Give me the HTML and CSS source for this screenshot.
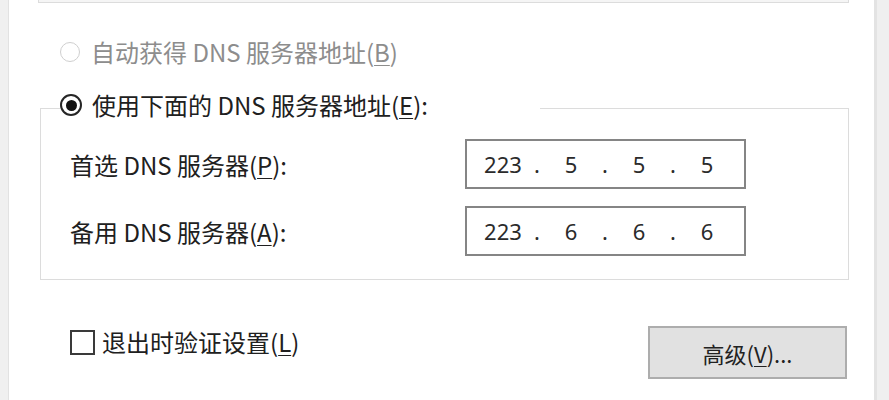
FILE: index.html
```html
<!DOCTYPE html>
<html lang="zh-CN">
<head>
<meta charset="utf-8">
<title>DNS 设置</title>
<link rel="stylesheet" href="styles.css">
</head>
<body>
<div class="window">
  <div class="edge-left"></div>
  <div class="dialog">
    <div class="prev-box"></div>

    <div class="option disabled">
      <span class="radio"></span>
      <span class="label">自动获得 DNS 服务器地址(<u>B</u>)</span>
    </div>

    <fieldset class="group">
      <legend class="group-legend">
        <span class="radio checked"><span class="dot"></span></span>
        <span class="label">使用下面的 DNS 服务器地址(<u>E</u>):</span>
      </legend>
      <div class="field-row first">
        <span class="field-label">首选 DNS 服务器(<u>P</u>):</span>
        <div class="ip-box">
          <span class="octet">223</span><span class="sep">.</span><span class="octet">5</span><span class="sep">.</span><span class="octet">5</span><span class="sep">.</span><span class="octet">5</span>
        </div>
      </div>
      <div class="field-row">
        <span class="field-label">备用 DNS 服务器(<u>A</u>):</span>
        <div class="ip-box">
          <span class="octet">223</span><span class="sep">.</span><span class="octet">6</span><span class="sep">.</span><span class="octet">6</span><span class="sep">.</span><span class="octet">6</span>
        </div>
      </div>
    </fieldset>

    <div class="footer">
      <div class="check-option">
        <span class="checkbox"></span>
        <span class="label">退出时验证设置(<u>L</u>)</span>
      </div>
      <button class="btn" type="button">高级(<u>V</u>)...</button>
    </div>
  </div>
  <div class="edge-right"></div>
</div>
</body>
</html>
```

FILE: styles.css
```css
html, body {
  margin: 0;
  padding: 0;
  background: #ffffff;
}

body {
  font-family: "Noto Sans CJK SC", "Noto Sans", sans-serif;
  color: #202020;
  font-size: 24px;
}

.window {
  display: flex;
  width: 889px;
  height: 400px;
  overflow: hidden;
}

.edge-left {
  width: 8px;
  flex: none;
  background: #f0f0f0;
  border-right: 1px solid #e2e2e2;
}

.edge-right {
  width: 12px;
  flex: none;
  background: #efefef;
  border-left: 3px solid #e3e3e3;
}

.dialog {
  flex: 1;
  display: flex;
  flex-direction: column;
  background: #ffffff;
}

.prev-box {
  height: 2px;
  margin: 0 25px 0 29px;
  background: #f5f5f5;
  border: 1px solid #dcdcdc;
  border-top: none;
}

.option {
  display: flex;
  align-items: center;
  height: 30px;
  margin-top: 34px;
  padding-left: 51px;
}

.label {
  line-height: 30px;
  white-space: nowrap;
}

.disabled .label {
  color: #8d8d8d;
}

.radio {
  box-sizing: border-box;
  width: 20px;
  height: 20px;
  border-radius: 50%;
  border: 1.5px solid #cfcfcf;
  margin-right: 11px;
  flex: none;
  display: flex;
  align-items: center;
  justify-content: center;
}

.radio.checked {
  width: 22px;
  height: 22px;
  border: 2.5px solid #262626;
  margin-right: 10px;
}

.radio .dot {
  width: 11px;
  height: 11px;
  border-radius: 50%;
  background: #111111;
}

.group {
  margin: 23px 25px 0 31px;
  padding: 0 0 23px 0;
  border: 1px solid #dcdcdc;
  min-width: 0;
}

.group-legend {
  display: flex;
  align-items: center;
  width: 480px;
  box-sizing: border-box;
  margin-left: 19px;
  padding: 0 0 6px 0;
  height: 36px;
}

.field-row {
  display: flex;
  align-items: center;
  padding-left: 29px;
  margin-top: 17px;
}

.field-row.first {
  margin-top: 13px;
}

.field-label {
  width: 395px;
  flex: none;
  white-space: nowrap;
}

.ip-box {
  box-sizing: border-box;
  width: 281px;
  height: 50px;
  border: 2px solid #858585;
  display: flex;
  align-items: center;
  padding-left: 8px;
  font-family: "Noto Sans", "Noto Sans CJK SC", sans-serif;
  font-size: 22px;
  color: #2b2b2b;
}

.octet {
  width: 56px;
  text-align: center;
}

.sep {
  width: 12px;
  text-align: center;
}

.footer {
  display: flex;
  justify-content: space-between;
  align-items: flex-start;
  margin-top: 46px;
  padding: 0 27px 0 61px;
}

.check-option {
  display: flex;
  align-items: center;
  margin-top: 1px;
}

.checkbox {
  box-sizing: border-box;
  width: 25px;
  height: 25px;
  border: 2px solid #3a3a3a;
  margin-right: 7px;
  flex: none;
}

.btn {
  box-sizing: border-box;
  width: 199px;
  height: 53px;
  background: #e1e1e1;
  border: 2px solid #adadad;
  font-family: "Noto Sans CJK SC", "Noto Sans", sans-serif;
  font-size: 22px;
  color: #222222;
  padding: 0;
}

u {
  text-decoration-thickness: 1px;
  text-underline-offset: 3px;
}
```
